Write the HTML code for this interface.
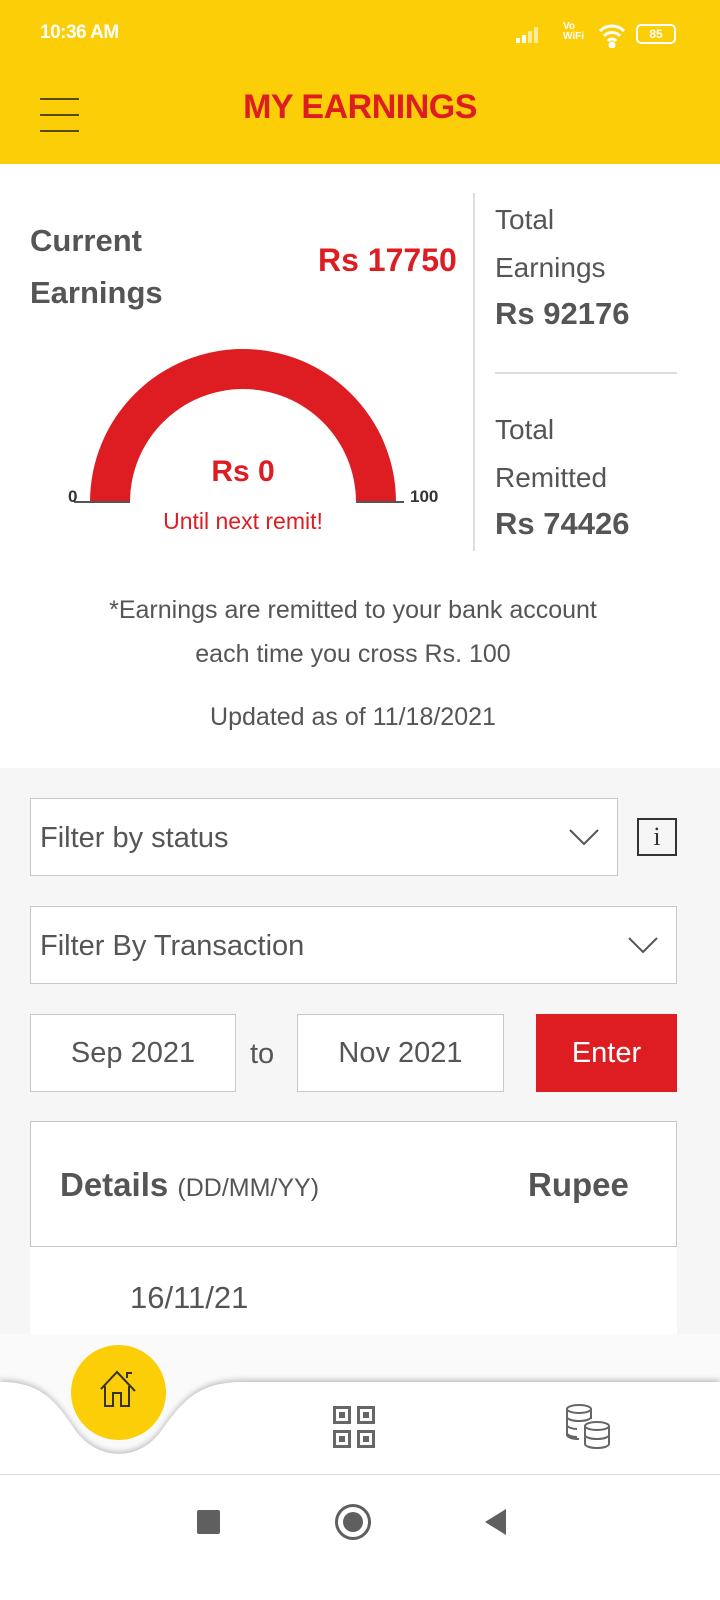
<!DOCTYPE html>
<html><head><meta charset="utf-8"><style>
*{margin:0;padding:0;box-sizing:border-box}
body{width:720px;height:1600px;position:relative;overflow:hidden;background:#fff;font-family:"Liberation Sans",sans-serif;color:#555}
.a{position:absolute}
.box{position:absolute;background:#fff;border:1.5px solid #c8c8c8}
</style></head><body>
<div class="a" style="left:0;top:0;width:720px;height:164px;background:#fbce07"></div>
<div class="a" style="left:40px;top:22px;color:#fff;font-weight:bold;font-size:19px;letter-spacing:-0.5px">10:36 AM</div>
<svg class="a" style="left:516px;top:26px" width="30" height="18" fill="#fff"><rect x="0" y="12" width="4" height="5"/><rect x="6" y="9" width="4" height="8"/><rect x="12" y="5" width="4" height="12" opacity="0.6"/><rect x="18" y="1" width="4" height="16" opacity="0.6"/></svg>
<div class="a" style="left:563px;top:22px;color:#fff;font-size:10px;line-height:10px;font-weight:bold">Vo<br>WiFi</div>
<svg class="a" style="left:598px;top:22px" width="28" height="26" fill="none" stroke="#fff" stroke-width="3"><path d="M2 9 A17 17 0 0 1 26 9 M6 14 A11 11 0 0 1 22 14 M10 19 A5 5 0 0 1 18 19"/><circle cx="14" cy="23" r="2" fill="#fff"/></svg>
<div class="a" style="left:636px;top:24px;width:40px;height:20px;border:2px solid #fff;border-radius:5px;color:#fff;font-size:12px;font-weight:bold;text-align:center;line-height:16px">85</div>
<div class="a" style="left:40px;top:98px;width:39px;height:2px;background:#5a4a10"></div>
<div class="a" style="left:40px;top:114px;width:39px;height:2px;background:#5a4a10"></div>
<div class="a" style="left:40px;top:130px;width:39px;height:2px;background:#5a4a10"></div>
<div class="a" style="left:0;width:720px;top:88px;text-align:center;color:#dd1d21;font-weight:bold;font-size:34px;letter-spacing:-0.5px">MY EARNINGS</div>

<div class="a" style="left:30px;top:215px;font-weight:bold;font-size:31px;line-height:52px;color:#555">Current<br>Earnings</div>
<div class="a" style="left:318px;top:242px;font-weight:bold;font-size:32px;color:#dd1d21">Rs 17750</div>
<svg class="a" style="left:0;top:340px" width="470" height="200">
<path d="M90 162 A153 153 0 0 1 396 162 L356 162 A113 113 0 0 0 130 162 Z" fill="#dd1d21"/>
<line x1="74" y1="162" x2="130" y2="162" stroke="#555" stroke-width="2"/>
<line x1="356" y1="162" x2="404" y2="162" stroke="#555" stroke-width="2"/>
</svg>
<div class="a" style="left:68px;top:487px;font-size:17px;font-weight:bold;color:#333">0</div>
<div class="a" style="left:410px;top:487px;font-size:17px;font-weight:bold;color:#333">100</div>
<div class="a" style="left:0;width:486px;top:455px;text-align:center;font-size:30px;font-weight:bold;color:#dd1d21">Rs 0</div>
<div class="a" style="left:0;width:486px;top:508px;text-align:center;font-size:23px;color:#dd1d21">Until next remit!</div>
<div class="a" style="left:473px;top:193px;width:2px;height:358px;background:#ddd"></div>
<div class="a" style="left:495px;top:372px;width:182px;height:2px;background:#ddd"></div>
<div class="a" style="left:495px;top:196px;font-size:28px;line-height:48px;color:#555">Total<br>Earnings</div>
<div class="a" style="left:495px;top:296px;font-size:31px;font-weight:bold;color:#555">Rs 92176</div>
<div class="a" style="left:495px;top:406px;font-size:28px;line-height:48px;color:#555">Total<br>Remitted</div>
<div class="a" style="left:495px;top:506px;font-size:31px;font-weight:bold;color:#555">Rs 74426</div>
<div class="a" style="left:0;width:706px;top:588px;text-align:center;font-size:25px;line-height:44px;color:#555">*Earnings are remitted to your bank account<br>each time you cross Rs. 100</div>
<div class="a" style="left:0;width:706px;top:703px;text-align:center;font-size:25px;color:#555">Updated as of 11/18/2021</div>

<div class="a" style="left:0;top:768px;width:720px;height:566px;background:#f6f6f6"></div>
<div class="box" style="left:30px;top:798px;width:588px;height:78px"></div>
<div class="a" style="left:40px;top:822px;font-size:29px;color:#555">Filter by status</div>
<svg class="a" style="left:568px;top:828px" width="32" height="18"><path d="M2 2 L16 16 L30 2" fill="none" stroke="#555" stroke-width="2"/></svg>
<div class="a" style="left:637px;top:818px;width:40px;height:38px;border:2px solid #333;font-family:'Liberation Serif',serif;font-size:26px;text-align:center;line-height:34px;color:#333">i</div>
<div class="box" style="left:30px;top:906px;width:647px;height:78px"></div>
<div class="a" style="left:40px;top:930px;font-size:29px;color:#555">Filter By Transaction</div>
<svg class="a" style="left:627px;top:936px" width="32" height="18"><path d="M2 2 L16 16 L30 2" fill="none" stroke="#555" stroke-width="2"/></svg>
<div class="box" style="left:30px;top:1014px;width:206px;height:78px;text-align:center;line-height:76px;font-size:29px">Sep 2021</div>
<div class="a" style="left:250px;top:1038px;font-size:29px">to</div>
<div class="box" style="left:297px;top:1014px;width:207px;height:78px;text-align:center;line-height:76px;font-size:29px">Nov 2021</div>
<div class="a" style="left:536px;top:1014px;width:141px;height:78px;background:#dd1d21;color:#fff;text-align:center;line-height:78px;font-size:29px">Enter</div>
<div class="box" style="left:30px;top:1121px;width:647px;height:126px"></div>
<div class="a" style="left:60px;top:1166px;font-size:33px;font-weight:bold;color:#555">Details <span style="font-weight:normal;font-size:25px">(DD/MM/YY)</span></div>
<div class="a" style="left:528px;top:1166px;font-size:33px;font-weight:bold;color:#555">Rupee</div>
<div class="a" style="left:30px;top:1247px;width:647px;height:87px;background:#fff"></div>
<div class="a" style="left:130px;top:1280px;font-size:31px;color:#555">16/11/21</div>

<div class="a" style="left:0;top:1334px;width:720px;height:140px;background:#fafafa"></div>
<svg class="a" style="left:0;top:1370px" width="720" height="110">
<defs><filter id="s"><feDropShadow dx="0" dy="-2" stdDeviation="3" flood-opacity="0.25"/></filter></defs>
<path d="M0 12 C40 12 55 30 75 60 C98 92 140 92 162 60 C185 28 200 12 245 12 L720 12 L720 110 L0 110 Z" fill="#fff" filter="url(#s)"/>
</svg>
<div class="a" style="left:71px;top:1345px;width:95px;height:95px;border-radius:50%;background:#fbce07"></div>
<svg class="a" style="left:99px;top:1369px" width="40" height="40"><path d="M2 20 L18 3 L36 22 M6 17 V37 H14 V24 H22 V37 H30 V17 M28 9 V4 H33" fill="none" stroke="#333" stroke-width="2"/></svg>
<svg class="a" style="left:333px;top:1406px" width="42" height="42" fill="#666"><path d="M0 0h18v18h-18zM3 3v12h12v-12zM24 0h18v18h-18zM27 3v12h12v-12zM0 24h18v18h-18zM3 27v12h12v-12zM24 24h18v18h-18zM27 27v12h12v-12z" fill-rule="evenodd"/><rect x="6" y="6" width="6" height="6"/><rect x="30" y="6" width="6" height="6"/><rect x="6" y="30" width="6" height="6"/><rect x="30" y="30" width="6" height="6"/></svg>
<svg class="a" style="left:565px;top:1404px" width="48" height="48" fill="none" stroke="#666" stroke-width="2"><ellipse cx="14" cy="5" rx="12" ry="4"/><path d="M2 5v26c0 2 5 4 12 4M2 13c0 2 5 4 12 4s12-2 12-4M2 21c0 2 5 4 10 4M2 29c0 2 5 4 10 4M26 5v10"/><ellipse cx="32" cy="22" rx="12" ry="4"/><path d="M20 22v18c0 2 5 4 12 4s12-2 12-4V22M20 31c0 2 5 4 12 4s12-2 12-4"/></svg>
<div class="a" style="left:0;top:1474px;width:720px;height:1px;background:#ddd"></div>
<div class="a" style="left:197px;top:1510px;width:23px;height:24px;background:#5f5f5f;border-radius:2px"></div>
<div class="a" style="left:335px;top:1504px;width:36px;height:36px;border:3px solid #5f5f5f;border-radius:50%"></div>
<div class="a" style="left:343px;top:1512px;width:20px;height:20px;background:#5f5f5f;border-radius:50%"></div>
<svg class="a" style="left:484px;top:1508px" width="24" height="28"><path d="M22 1 V27 L1 14 Z" fill="#5f5f5f"/></svg>
</body></html>
